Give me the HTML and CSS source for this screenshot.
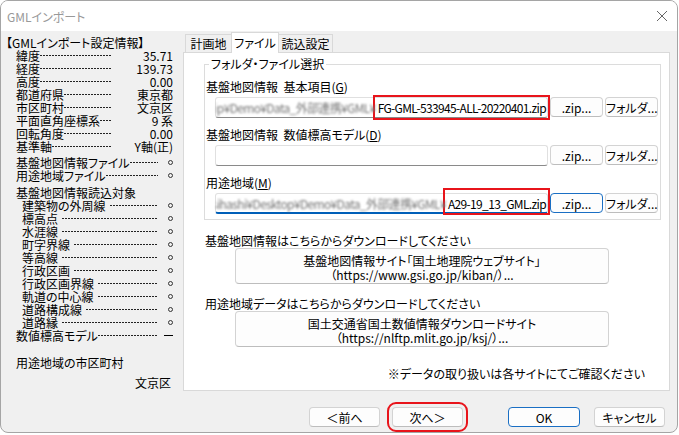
FILE: index.html
```html
<!DOCTYPE html>
<html lang="ja">
<head>
    <meta charset="UTF-8">
    <title>GMLインポート</title>
    <link rel="stylesheet" href="styles.css">
</head>
<body>
    <div class="window">
        <div class="titlebar">
            <span class="title">GMLインポート</span>
            <svg class="close" width="12" height="12" viewBox="0 0 12 12">
                <path d="M1 1 L11 11 M11 1 L1 11" stroke="#666" stroke-width="1" fill="none"/>
            </svg>
        </div>
        <div class="main">
            <div class="info">
                <div class="info-title">【GMLインポート設定情報】</div>
                <div class="row"><span>緯度</span><span class="dots"></span><span class="val">35.71</span></div>
                <div class="row"><span>経度</span><span class="dots"></span><span class="val">139.73</span></div>
                <div class="row"><span>高度</span><span class="dots"></span><span class="val">0.00</span></div>
                <div class="row"><span>都道府県</span><span class="dots"></span><span class="val">東京都</span></div>
                <div class="row"><span>市区町村</span><span class="dots"></span><span class="val">文京区</span></div>
                <div class="row"><span>平面直角座標系</span><span class="dots"></span><span class="val">9 系</span></div>
                <div class="row"><span>回転角度</span><span class="dots"></span><span class="val">0.00</span></div>
                <div class="row"><span>基準軸</span><span class="dots"></span><span class="val">Y軸(正)</span></div>

                <div class="block">
                    <div class="row"><span>基盤地図情報ファイル</span><span class="dots"></span><span class="mark-val"><i class="circle"></i></span></div>
                    <div class="row"><span>用途地域ファイル</span><span class="dots"></span><span class="mark-val"><i class="circle"></i></span></div>
                </div>

                <div class="block">
                    <div class="row"><span>基盤地図情報読込対象</span></div>
                    <div class="row sub"><span>建築物の外周線</span><span class="dots"></span><span class="mark-val"><i class="circle"></i></span></div>
                    <div class="row sub"><span>標高点</span><span class="dots"></span><span class="mark-val"><i class="circle"></i></span></div>
                    <div class="row sub"><span>水涯線</span><span class="dots"></span><span class="mark-val"><i class="circle"></i></span></div>
                    <div class="row sub"><span>町字界線</span><span class="dots"></span><span class="mark-val"><i class="circle"></i></span></div>
                    <div class="row sub"><span>等高線</span><span class="dots"></span><span class="mark-val"><i class="circle"></i></span></div>
                    <div class="row sub"><span>行政区画</span><span class="dots"></span><span class="mark-val"><i class="circle"></i></span></div>
                    <div class="row sub"><span>行政区画界線</span><span class="dots"></span><span class="mark-val"><i class="circle"></i></span></div>
                    <div class="row sub"><span>軌道の中心線</span><span class="dots"></span><span class="mark-val"><i class="circle"></i></span></div>
                    <div class="row sub"><span>道路構成線</span><span class="dots"></span><span class="mark-val"><i class="circle"></i></span></div>
                    <div class="row sub"><span>道路縁</span><span class="dots"></span><span class="mark-val"><i class="circle"></i></span></div>
                    <div class="row"><span>数値標高モデル</span><span class="dots"></span><span class="mark-val"><i class="dash"></i></span></div>
                </div>

                <div class="row city-label">用途地域の市区町村</div>
                <div class="row city-value">文京区</div>
            </div>

            <div class="tabs">
                <div class="tabstrip">
                    <div class="tab t1">計画地</div>
                    <div class="tab t2 active">ファイル</div>
                    <div class="tab t3">読込設定</div>
                </div>
                <div class="tabpage">
                    <div class="group">
                        <div class="legend">フォルダ・ファイル選択</div>

                        <div class="field-label first">基盤地図情報&nbsp;&nbsp;基本項目(<u>G</u>)</div>
                        <div class="filerow">
                            <div class="path">
                                <span class="hidden-part"><span>ip¥Demo¥Data_外部連携¥GML¥</span></span>
                                <span class="mark">FG-GML-533945-ALL-20220401.zip</span>
                            </div>
                            <button class="btn">.zip...</button>
                            <button class="btn">フォルダ...</button>
                        </div>

                        <div class="field-label">基盤地図情報&nbsp;&nbsp;数値標高モデル(<u>D</u>)</div>
                        <div class="filerow">
                            <div class="path"></div>
                            <button class="btn">.zip...</button>
                            <button class="btn">フォルダ...</button>
                        </div>

                        <div class="field-label">用途地域(<u>M</u>)</div>
                        <div class="filerow">
                            <div class="path focused">
                                <span class="hidden-part"><span>sihashi¥Desktop¥Demo¥Data_外部連携¥GML¥</span></span>
                                <span class="mark tall">A29-19_13_GML.zip</span>
                            </div>
                            <button class="btn default">.zip...</button>
                            <button class="btn">フォルダ...</button>
                        </div>
                    </div>

                    <div class="dl-label first">基盤地図情報はこちらからダウンロードしてください</div>
                    <button class="dl-btn">基盤地図情報サイト「国土地理院ウェブサイト」<br>（https://www.gsi.go.jp/kiban/）...</button>

                    <div class="dl-label">用途地域データはこちらからダウンロードしてください</div>
                    <button class="dl-btn">国土交通省国土数値情報ダウンロードサイト<br>（https://nlftp.mlit.go.jp/ksj/）...</button>

                    <div class="note">※データの取り扱いは各サイトにてご確認ください</div>
                </div>
            </div>
        </div>
        <div class="footer">
            <button class="btn wide prev">＜前へ</button>
            <button class="btn wide next">次へ＞</button>
            <button class="btn wide default ok">OK</button>
            <button class="btn wide cancel">キャンセル</button>
        </div>
    </div>
</body>
</html>
```

FILE: styles.css
```css
* {
    box-sizing: border-box;
}
body {
    margin: 0;
    background: #fff;
    font-family: "Noto Sans CJK JP", "Noto Sans", sans-serif;
    font-size: 12px;
    color: #000;
    font-feature-settings: "palt";
}
button {
    font-family: inherit;
    font-size: 12px;
    font-feature-settings: "palt";
    color: #000;
    margin: 0;
}
.window {
    width: 678px;
    height: 433px;
    border: 1px solid #a5a5a5;
    border-radius: 8px;
    overflow: hidden;
    background: #f0f0f0;
    display: flex;
    flex-direction: column;
}
.titlebar {
    height: 30px;
    flex-shrink: 0;
    background: #fff;
    display: flex;
    align-items: center;
    justify-content: space-between;
    padding: 0 9px 0 6px;
}
.title {
    color: #999;
}
.main {
    display: flex;
    height: 360px;
    flex-shrink: 0;
}

/* left info panel */
.info {
    width: 182px;
    padding: 5px 10px 0 4px;
    line-height: 13px;
}
.info-title {
    height: 13px;
    margin-left: 1px;
}
.row {
    display: flex;
    align-items: center;
    height: 13px;
    padding-left: 11px;
    white-space: nowrap;
}
.row.sub {
    padding-left: 17px;
}
.row.sub .dots {
    margin-left: 4px;
}
.dots {
    flex: 1;
    height: 13px;
    background-image: repeating-linear-gradient(90deg, #222 0 2px, transparent 2px 3px);
    background-size: 100% 1px;
    background-repeat: no-repeat;
    background-position: left center;
}
.val {
    width: 61px;
    text-align: right;
}
.mark-val {
    width: 15px;
    display: flex;
    justify-content: flex-end;
    align-items: center;
}
.circle {
    display: block;
    width: 5px;
    height: 5px;
    border: 1px solid #333;
    border-radius: 50%;
}
.dash {
    display: block;
    width: 9px;
    height: 1px;
    background: #000;
}
.block {
    margin-top: 3px;
}
.block + .block {
    margin-top: 4px;
}
.city-label {
    margin-top: 14px;
}
.city-value {
    margin-top: 7px;
    justify-content: flex-end;
    padding-right: 2px;
}

/* tabs */
.tabs {
    width: 487px;
    display: flex;
    flex-direction: column;
}
.tabstrip {
    height: 20px;
    margin-top: 1px;
    padding-left: 2px;
    display: flex;
    align-items: flex-end;
    flex-shrink: 0;
}
.tab {
    height: 18px;
    line-height: 17px;
    text-align: center;
    border: 1px solid #d9d9d9;
    border-bottom: none;
    background: #f0f0f0;
}
.tab.t1 { width: 47px; }
.tab.t2 { width: 48px; margin-left: -1px; }
.tab.t3 { width: 55px; margin-left: -1px; }
.tab.active {
    height: 21px;
    line-height: 19px;
    margin-bottom: -1px;
    background: #fff;
    position: relative;
    z-index: 1;
}
.tabpage {
    flex: 1;
    border: 1px solid #d9d9d9;
    background: #fff;
    padding: 0 24px 0 20px;
}
.group {
    margin: 11px -16px 0 0;
    border: 1px solid #dcdcdc;
    padding: 0 0 5px 0;
}
.legend {
    width: max-content;
    margin: -8px 0 0 4px;
    padding: 0 2px;
    background: #fff;
    line-height: 14px;
}
.field-label {
    line-height: 14px;
    margin-top: 10px;
    padding-left: 1px;
}
.field-label.first {
    margin-top: 9px;
}
.field-label u {
    text-decoration: underline;
}
.filerow {
    display: flex;
    gap: 2px;
    height: 21px;
    margin: 3px 0 0 10px;
}
.path {
    width: 333px;
    border: 1px solid #e0e0e0;
    border-bottom-color: #8a8a8a;
    border-radius: 3px;
    background: #fff;
    display: flex;
    justify-content: flex-end;
    align-items: stretch;
    white-space: nowrap;
    letter-spacing: -0.65px;
}
.path.focused {
    border-bottom: 2px solid #005fb8;
}
.hidden-part {
    flex: 1;
    overflow: hidden;
    display: flex;
    justify-content: flex-end;
    align-items: center;
    color: #777;
    filter: blur(1.1px);
}
.hidden-part span {
    flex-shrink: 0;
}
.mark {
    flex-shrink: 0;
    display: flex;
    align-items: center;
    padding: 0 1px 0 2px;
    outline: 2px solid #e8141b;
    outline-offset: 1px;
}
.mark.tall {
    margin-top: -3px;
    padding-top: 3px;
}
.btn {
    width: 53px;
    height: 20px;
    margin-top: 0;
    padding: 0;
    background: #fdfdfd;
    border: 1px solid #d3d3d3;
    border-bottom-color: #bdbdbd;
    border-radius: 4px;
    white-space: nowrap;
}
.btn.default {
    border-color: #1a6fc4;
}

/* download links */
.dl-label {
    line-height: 14px;
    margin-top: 12px;
    padding-left: 1px;
}
.dl-label.first {
    margin-top: 14px;
}
.dl-btn {
    display: block;
    width: 374px;
    height: 36px;
    margin: 0 0 0 31px;
    padding: 4px 0 0;
    line-height: 14px;
    text-align: center;
    background: #fdfdfd;
    border: 1px solid #d3d3d3;
    border-bottom-color: #bdbdbd;
    border-radius: 4px;
}
.dl-btn + .dl-label {
    margin-top: 13px;
}
.note {
    margin-top: 20px;
    line-height: 14px;
    text-align: right;
}

/* footer buttons */
.footer {
    display: flex;
    padding: 16px 0 0 308px;
}
.btn.wide {
    width: 71px;
    height: 20px;
}
.btn.next {
    margin-left: 12px;
    outline: 2px solid #e8141b;
    outline-offset: 3px;
}
.btn.ok {
    width: 72px;
    margin-left: 45px;
}
.btn.cancel {
    margin-left: 14px;
}
```
